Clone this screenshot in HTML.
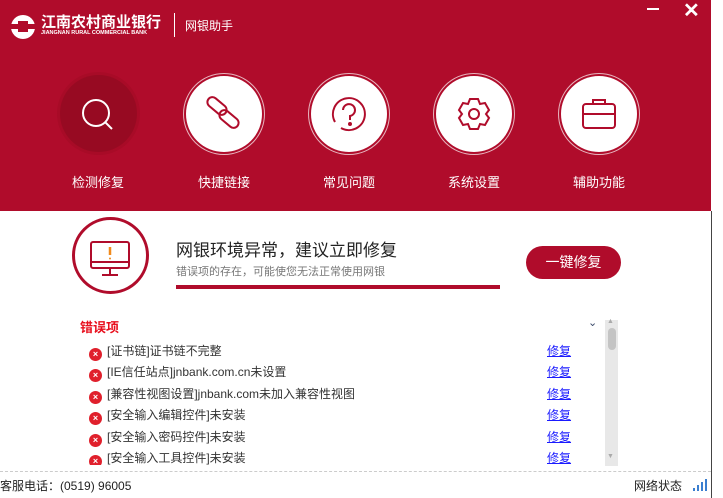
<!DOCTYPE html>
<html><head><meta charset="utf-8"><style>
*{margin:0;padding:0;box-sizing:border-box}
body{width:723px;height:498px;background:#fff;font-family:"Liberation Sans","Noto Sans CJK SC",sans-serif;position:relative;overflow:hidden}
.hdr{position:absolute;left:0;top:0;width:711px;height:211px;background:#b00c2b}
.abs{position:absolute}
.circ{position:absolute;width:76px;height:76px;border-radius:50%;background:#fff;box-shadow:0 0 0 2px #b00c2b,0 0 0 3px rgba(255,255,255,.7)}
.lbl{position:absolute;top:172px;width:100px;text-align:center;color:#fff;font-size:13px}
.row{position:absolute;left:89px;font-size:12px;color:#333;height:18px;line-height:18px}
.row i{display:inline-block;width:13px;height:13px;border-radius:50%;background:#e0202c;color:#fff;font-style:normal;font-size:9px;line-height:13px;text-align:center;font-weight:bold;margin-right:5px;vertical-align:-2px}
.fix{position:absolute;left:547px;font-size:12px;line-height:18px;color:#1a1aff;text-decoration:underline}
</style></head><body>
<div class="hdr">
 <svg class="abs" style="left:10px;top:14px" width="26" height="26" viewBox="0 0 26 26"><circle cx="13" cy="13" r="12" fill="#fff"/><rect x="0" y="10" width="26" height="5" fill="#b00c2b"/><rect x="8" y="7" width="10" height="3" fill="#b00c2b"/><rect x="8" y="15" width="10" height="3" fill="#b00c2b"/></svg>
 <div class="abs" style="left:41px;top:11px;color:#fff;font-size:15px;font-weight:bold;white-space:nowrap">江南农村商业银行</div>
 <div class="abs" style="left:41px;top:30px;color:#fff;font-size:5.5px;font-weight:bold;white-space:nowrap">JIANGNAN RURAL COMMERCIAL BANK</div>
 <div class="abs" style="left:174px;top:13px;width:1px;height:24px;background:#fff"></div>
 <div class="abs" style="left:185px;top:17px;color:#fff;font-size:12px">网银助手</div>
 <div class="abs" style="left:647px;top:8px;width:12px;height:2px;background:#fff"></div>
 <div class="abs" style="left:683px;top:-2px;color:#fff;font-size:20px;font-weight:bold">✕</div>

 <div class="abs" style="left:60px;top:75px;width:77px;height:77px;border-radius:50%;background:#970a22;box-shadow:0 0 0 3px #a80b27"></div>
 <svg class="abs" style="left:78px;top:95px" width="40" height="40"><circle cx="18" cy="18" r="13" fill="none" stroke="#fff" stroke-width="2"/><line x1="27" y1="27" x2="34" y2="34" stroke="#fff" stroke-width="2"/></svg>

 <div class="circ" style="left:186px;top:76px"></div>
 <svg class="abs" style="left:204px;top:94px" width="40" height="40" fill="none" stroke="#b00c2b" stroke-width="2"><rect x="2" y="7" width="22" height="10" rx="5" transform="rotate(40 13 12)"/><rect x="14" y="20" width="22" height="10" rx="5" transform="rotate(40 25 25)"/></svg>

 <div class="circ" style="left:311px;top:76px"></div>
 <svg class="abs" style="left:329px;top:94px" width="40" height="40" fill="none" stroke="#b00c2b" stroke-width="2"><path d="M6 28 A16 16 0 1 1 12 34"/><path d="M14 16 a6 6 0 1 1 7 6 v4"/><circle cx="21" cy="30" r="1" fill="#b00c2b"/></svg>

 <div class="circ" style="left:436px;top:76px"></div>
 <svg class="abs" style="left:454px;top:94px" width="40" height="40" fill="none" stroke="#b00c2b" stroke-width="2"><path d="M16 5h8l2 5 5-1 4 7-3 4 3 4-4 7-5-1-2 5h-8l-2-5-5 1-4-7 3-4-3-4 4-7 5 1z"/><circle cx="20" cy="20" r="5"/></svg>

 <div class="circ" style="left:561px;top:76px"></div>
 <svg class="abs" style="left:579px;top:94px" width="40" height="40" fill="none" stroke="#b00c2b" stroke-width="2"><rect x="4" y="10" width="32" height="24" rx="3"/><path d="M14 10V6h12v4"/><line x1="4" y1="20" x2="36" y2="20"/></svg>

 <div class="lbl" style="left:48px">检测修复</div>
 <div class="lbl" style="left:174px">快捷链接</div>
 <div class="lbl" style="left:299px">常见问题</div>
 <div class="lbl" style="left:424px">系统设置</div>
 <div class="lbl" style="left:549px">辅助功能</div>
</div>
<div class="abs" style="left:711px;top:211px;width:1px;height:287px;background:#444"></div>

<div class="abs" style="left:72px;top:217px;width:77px;height:77px;border-radius:50%;border:3px solid #b00c2b"></div>
<svg class="abs" style="left:88px;top:240px" width="46" height="40" fill="none" stroke="#b00c2b" stroke-width="2"><rect x="3" y="2" width="38" height="26" rx="2"/><line x1="3" y1="22" x2="41" y2="22"/><line x1="22" y1="28" x2="22" y2="35"/><line x1="14" y1="35" x2="30" y2="35"/><line x1="22" y1="7" x2="22" y2="15" stroke="#f08a1c" stroke-width="2.5"/><circle cx="22" cy="18.5" r="1" fill="#f08a1c" stroke="none"/></svg>
<div class="abs" style="left:176px;top:236px;font-size:17px;color:#222">网银环境异常，建议立即修复</div>
<div class="abs" style="left:176px;top:263px;font-size:11px;color:#777">错误项的存在，可能使您无法正常使用网银</div>
<div class="abs" style="left:176px;top:285px;width:324px;height:4px;background:#b00c2b"></div>
<div class="abs" style="left:526px;top:246px;width:95px;height:33px;border-radius:17px;background:#b00c2b;color:#fff;font-size:14px;text-align:center;line-height:33px">一键修复</div>

<div class="abs" style="left:80px;top:317px;font-size:13px;color:#e8101e;font-weight:bold">错误项</div>
<div class="abs" style="left:588px;top:316px;font-size:11px;color:#3a4a6a">⌄</div>
<div class="abs" style="left:605px;top:320px;width:13px;height:146px;background:#e8e8e8"></div>
<div class="abs" style="left:608px;top:328px;width:8px;height:22px;border-radius:4px;background:#c4c4c4"></div>
<div class="abs" style="left:607px;top:318px;font-size:7px;color:#aaa">▲</div>
<div class="abs" style="left:607px;top:453px;font-size:7px;color:#aaa">▼</div>

<div class="row" style="top:342px"><i>×</i>[证书链]证书链不完整</div><div class="fix" style="top:342px">修复</div>
<div class="row" style="top:363px"><i>×</i>[IE信任站点]jnbank.com.cn未设置</div><div class="fix" style="top:363px">修复</div>
<div class="row" style="top:385px"><i>×</i>[兼容性视图设置]jnbank.com未加入兼容性视图</div><div class="fix" style="top:385px">修复</div>
<div class="row" style="top:406px"><i>×</i>[安全输入编辑控件]未安装</div><div class="fix" style="top:406px">修复</div>
<div class="row" style="top:428px"><i>×</i>[安全输入密码控件]未安装</div><div class="fix" style="top:428px">修复</div>
<div class="row" style="top:449px;height:16px;overflow:hidden"><i>×</i>[安全输入工具控件]未安装</div><div class="fix" style="top:449px">修复</div>

<div class="abs" style="left:0;top:471px;width:711px;border-top:1px dashed #ccc"></div>
<div class="abs" style="left:0;top:477px;font-size:12px;color:#222">客服电话：(0519) 96005</div>
<div class="abs" style="left:634px;top:477px;font-size:12px;color:#222">网络状态</div>
<svg class="abs" style="left:693px;top:479px" width="14" height="12" fill="#3b7fd0"><rect x="0" y="9" width="2" height="3"/><rect x="4" y="6" width="2" height="6"/><rect x="8" y="3" width="2" height="9"/><rect x="12" y="0" width="2" height="12"/></svg>
</body></html>
